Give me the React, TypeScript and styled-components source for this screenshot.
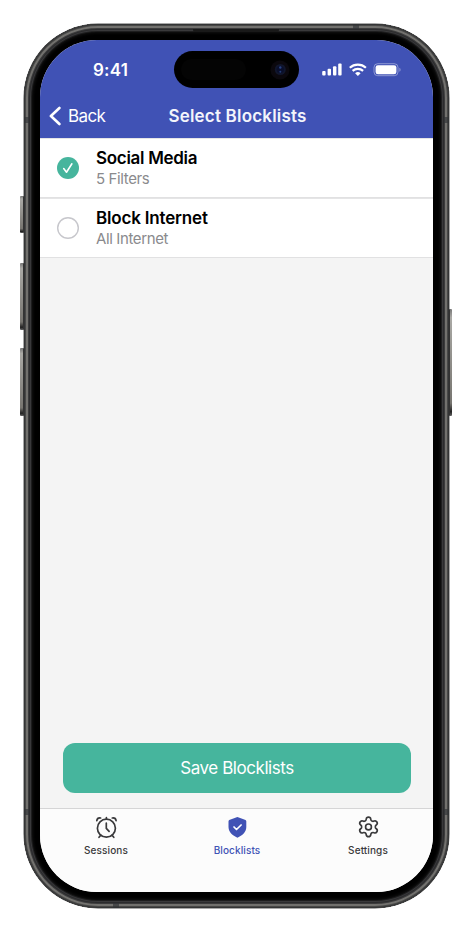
import React from "react";
import styled, { createGlobalStyle } from "styled-components";
import { Settings } from "lucide-react";

const Global = createGlobalStyle`
  * { box-sizing: border-box; }
  body { margin: 0; background: #fff; font-family: Inter, "Liberation Sans", sans-serif; }
`;

const Stage = styled.main`
  width: 473px;
  height: 932px;
  padding: 24px 0 0 24px;
  background: #fff;
  overflow: hidden;
`;

const Frame = styled.div`
  position: relative;
  width: 425px;
  height: 884px;
  padding: 16px;
  border-radius: 74px;
  background: #000;
  box-shadow:
    0 0 0 0.5px #555,
    inset 0 0 0 1px #343536,
    inset 0 0 0 2px #484847,
    inset 0 0 0 4px #72716e,
    inset 0 0 0 5px #3b3b3c,
    inset 0 0 0 6px #2b2b2d,
    inset 0 0 0 7px #39393b,
    inset 0 0 0 8px #1d1d1e,
    inset 0 0 3px 9px #111;
`;

const SideKey = styled.i<{ $top: number; $height: number; $right?: boolean }>`
  position: absolute;
  top: ${(p) => p.$top}px;
  ${(p) => (p.$right ? "right: -3px;" : "left: -4px;")}
  width: ${(p) => (p.$right ? 3 : 4)}px;
  height: ${(p) => p.$height}px;
  border-radius: 1px;
  background: linear-gradient(to bottom, #777, #aaa9a5 8%, #777570 88%, #222 96%, #666);
  border-${(p) => (p.$right ? "left" : "right")}: 1px solid #333;
`;

const Antenna = styled.i<{ $x: number; $y: number; $wide?: boolean }>`
  position: absolute;
  left: ${(p) => p.$x}px;
  top: ${(p) => p.$y}px;
  width: ${(p) => (p.$wide ? 6 : 5)}px;
  height: ${(p) => (p.$wide ? 5 : 6)}px;
  background: rgba(48, 50, 54, 0.65);
`;

const Speaker = styled.i`
  position: absolute;
  left: 169px;
  top: 5px;
  width: 86px;
  height: 3px;
  border-radius: 0 0 2px 2px;
  background: #191919;
`;

const Screen = styled.div`
  display: flex;
  flex-direction: column;
  width: 393px;
  height: 852px;
  overflow: hidden;
  border-radius: 57px;
  background: #f4f4f4;
`;

const Header = styled.header`
  height: 98px;
  flex: none;
  color: #fff;
  background: #4052b5;
`;

const StatusBar = styled.div`
  display: grid;
  grid-template-columns: 134px 125px 134px;
  height: 59px;
  padding-top: 11px;
`;

const Time = styled.div`
  padding: 9px 0 0 7px;
  text-align: center;
  font-size: 17px;
  line-height: 20px;
  font-weight: 600;
  letter-spacing: 0.2px;
`;

const Island = styled.div`
  display: flex;
  align-items: center;
  justify-content: space-between;
  height: 37px;
  padding: 0 9px 0 7px;
  border-radius: 19px;
  background: #000;
`;

const Sensor = styled.i`
  width: 65px;
  height: 21px;
  border-radius: 11px;
  background: #040404;
`;

const StatusIcons = styled.div`
  padding: 11px 0 0 22px;
  svg { display: block; }
`;

const NavBar = styled.div`
  display: grid;
  grid-template-columns: 98px 1fr 98px;
  align-items: center;
  height: 34px;
`;

const Back = styled.button`
  display: flex;
  align-items: center;
  gap: 7px;
  padding: 0 0 0 9px;
  border: 0;
  color: #fff;
  background: none;
  font: 400 17px/22px Inter, sans-serif;
  letter-spacing: -0.6px;
`;

const Title = styled.h1`
  margin: 0;
  padding-left: 2px;
  text-align: center;
  font-size: 17px;
  line-height: 22px;
  font-weight: 600;
  color: #f3f4fb;
  letter-spacing: 0.2px;
  white-space: nowrap;
`;

const List = styled.section`
  flex: 1;
`;

const Row = styled.div`
  display: flex;
  align-items: center;
  gap: 17px;
  height: 60px;
  padding-left: 17px;
  background: #fff;
  box-shadow: inset 0 1px #e5e5e6, inset 0 -1px #e1e1e2;
`;

const Check = styled.span<{ $checked?: boolean }>`
  display: grid;
  place-items: center;
  width: 22px;
  height: 22px;
  border-radius: 50%;
  background: ${(p) => (p.$checked ? "#46b59d" : "#fff")};
  box-shadow: ${(p) => (p.$checked ? "none" : "inset 0 0 0 1.4px #c7c7cc")};
`;

const Name = styled.div<{ $spacing: number }>`
  font-size: 17px;
  line-height: 21px;
  font-weight: 600;
  letter-spacing: ${(p) => p.$spacing}px;
  color: #000;
`;

const Detail = styled.div`
  font-size: 15px;
  line-height: 20px;
  color: #8a8a8d;
  letter-spacing: -0.38px;
`;

const Save = styled.button`
  flex: none;
  height: 50px;
  margin: 0 22px 15px 23px;
  border: 0;
  border-radius: 12px;
  color: #fff;
  background: #46b59d;
  font: 400 17px/22px Inter, sans-serif;
  letter-spacing: -0.45px;
`;

const Tabs = styled.nav`
  display: grid;
  grid-template-columns: repeat(3, 1fr);
  flex: none;
  height: 84px;
  border-top: 1px solid #d5d5d6;
  background: #fcfcfc;
`;

const Tab = styled.div<{ $active?: boolean }>`
  display: flex;
  flex-direction: column;
  align-items: center;
  padding: 6px 0 0 1px;
  color: ${(p) => (p.$active ? "#4052b5" : "#39393b")};
  font-size: 10px;
  line-height: 12px;
  font-weight: 500;
  letter-spacing: 0.1px;
  svg { display: block; margin-bottom: 5px; }
`;

const SignalIcons = () => (
  <svg width="82" height="16" viewBox="0 0 82 16" fill="none">
    <g fill="#fff">
      <rect x="1.2" y="9" width="3.4" height="4.5" rx="1" />
      <rect x="6.6" y="6.8" width="3.4" height="6.7" rx="1" />
      <rect x="12" y="4.2" width="3.4" height="9.3" rx="1" />
      <rect x="17.2" y="1.5" width="3.4" height="12" rx="1" />
    </g>
    <path d="M28.8 5.8a12 12 0 0 1 16.1 0M31.6 8.9a8 8 0 0 1 10.5 0" stroke="#fff" strokeWidth="2.2" />
    <path d="M34.1 11.2a4.1 4.1 0 0 1 5.5 0l-2.75 2.8Z" fill="#fff" />
    <rect x="53" y="1.7" width="24" height="12" rx="3.7" stroke="#fff" strokeOpacity=".4" />
    <rect x="54.6" y="3.2" width="20.8" height="9" rx="2.3" fill="#fff" />
    <path d="M78.4 5.7v4c1.6-.6 1.6-3.4 0-4" fill="#fff" fillOpacity=".4" />
  </svg>
);

const Camera = () => (
  <svg width="20" height="20" viewBox="0 0 20 20">
    <circle cx="10" cy="10" r="9.5" fill="#0b080d" />
    <circle cx="10.3" cy="9.5" r="5.5" fill="#11162c" />
    <circle cx="10.3" cy="9.5" r="3.6" fill="#090e2b" />
    <circle cx="10.3" cy="7.5" r="1.2" fill="#294180" />
    <circle cx="10.3" cy="11.7" r="1" fill="#243c76" />
  </svg>
);

const AlarmIcon = () => (
  <svg width="24" height="24" viewBox="0 0 24 24" fill="none" stroke="currentColor" strokeWidth="1.7" strokeLinecap="round" strokeLinejoin="round">
    <circle cx="12.4" cy="13.2" r="9" />
    <path d="M12.3 8.2v5.2l2.8 3M6.8 20.2 5 22.3M18 20.2l1.8 2.1M12.4 2.7v1.2M2.8 5.6c.3-1.9 1.8-2.9 3.8-2.6M22.1 5.6c-.3-1.9-1.8-2.9-3.8-2.6" />
  </svg>
);

const ShieldIcon = () => (
  <svg width="24" height="24" viewBox="0 0 24 24" fill="none">
    <path d="M12.4 2 19.9 4.8c1 .4 1.4 1 1.4 2V12c0 5.2-4 8.5-8.9 10.7C7.5 20.5 3.5 17.2 3.5 12V6.8c0-1 .4-1.6 1.4-2Z" fill="currentColor" />
    <path d="m9 12 2.5 2.5 4.6-4.5" stroke="#fff" strokeWidth="1.7" strokeLinecap="round" strokeLinejoin="round" />
  </svg>
);

export default function App() {
  return (
    <>
      <Global />
      <Stage>
        <Frame>
          <SideKey $top={172} $height={37} />
          <SideKey $top={239} $height={67} />
          <SideKey $top={324} $height={68} />
          <SideKey $top={285} $height={107} $right />
          <Antenna $x={0} $y={93} />
          <Antenna $x={420} $y={93} />
          <Antenna $x={0} $y={785} />
          <Antenna $x={420} $y={785} />
          <Antenna $x={329} $y={0} $wide />
          <Antenna $x={89} $y={879} $wide />
          <Speaker />
          <Screen>
            <Header>
              <StatusBar>
                <Time>9:41</Time>
                <Island><Sensor /><Camera /></Island>
                <StatusIcons><SignalIcons /></StatusIcons>
              </StatusBar>
              <NavBar>
                <Back>
                  <svg width="12" height="20" viewBox="0 0 12 20" fill="none" stroke="currentColor" strokeWidth="2.6" strokeLinecap="round" strokeLinejoin="round"><path d="m10.4 2-8.5 8 8.5 8" /></svg>
                  Back
                </Back>
                <Title>Select Blocklists</Title>
              </NavBar>
            </Header>
            <List>
              <Row>
                <Check $checked>
                  <svg width="14" height="14" viewBox="0 0 14 14" fill="none" stroke="#fff" strokeWidth="1.6" strokeLinecap="round" strokeLinejoin="round"><path d="m2.7 7.6 2.8 3.6 5.4-8.4" /></svg>
                </Check>
                <div><Name $spacing={-0.3}>Social Media</Name><Detail>5 Filters</Detail></div>
              </Row>
              <Row>
                <Check />
                <div><Name $spacing={-0.18}>Block Internet</Name><Detail>All Internet</Detail></div>
              </Row>
            </List>
            <Save>Save Blocklists</Save>
            <Tabs>
              <Tab><AlarmIcon />Sessions</Tab>
              <Tab $active><ShieldIcon />Blocklists</Tab>
              <Tab><Settings size={24} strokeWidth={1.7} viewBox="-0.8 -0.2 24.6 24.6" />Settings</Tab>
            </Tabs>
          </Screen>
        </Frame>
      </Stage>
    </>
  );
}
